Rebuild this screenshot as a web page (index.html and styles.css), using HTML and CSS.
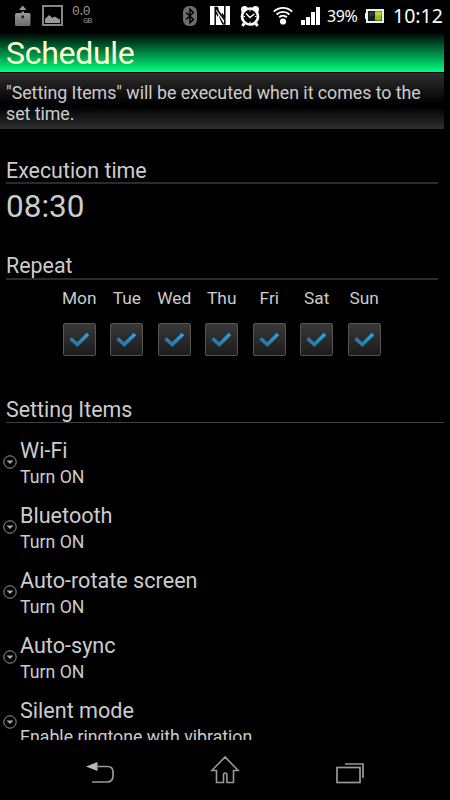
FILE: index.html
```
<!DOCTYPE html>
<html lang="en">
<head>
    <meta charset="UTF-8">
    <meta name="viewport" content="width=device-width, initial-scale=1.0">
    <title>Schedule</title>
    <link rel="stylesheet" href="styles.css">
</head>
<body>
    <svg class="defs" width="0" height="0">
        <defs>
            <linearGradient id="blue" x1="0" y1="1" x2="1" y2="0">
                <stop offset="0" stop-color="#2a6f98"/>
                <stop offset="1" stop-color="#2aa4e0"/>
            </linearGradient>
            <linearGradient id="gray" x1="0" y1="0" x2="0" y2="1">
                <stop offset="0" stop-color="#999"/>
                <stop offset="1" stop-color="#6c6c6c"/>
            </linearGradient>
        </defs>
        <symbol id="check" viewBox="0 0 31 31">
            <path d="M6.500 14.500l6.800 6 10.700-10.500" fill="none" stroke="url(#blue)" stroke-width="3.600"/>
        </symbol>
        <symbol id="arrow" viewBox="0 0 14 14">
            <circle cx="7" cy="7" r="6.2" fill="none" stroke="#999" stroke-width="1"/>
            <path d="M3.500 5.500h7L7 9z" fill="#aaa"/>
        </symbol>
    </svg>
    <div class="status">
        <svg class="icon-update" width="16" height="22" viewBox="0 0 16 22">
            <path d="M4 5l3.700-4.500L11.500 5z" fill="#999"/>
            <path d="M6.500 6.500H9V8H6.500z" fill="#999"/>
            <rect x="0" y="8" width="15.500" height="13" rx="1.500" fill="url(#gray)"/>
            <path d="M6.500 10.500h2.500v2l-1.200 1.500-1.300-1.500z" fill="#222"/>
        </svg>
        <svg class="icon-image" width="21" height="21" viewBox="0 0 21 21">
            <rect x="1" y="1" width="19" height="19" fill="none" stroke="#858585" stroke-width="2"/>
            <path d="M3 18v-4l4-4 3.500 3 2-1.500L18 14.500V18z" fill="#999"/>
        </svg>
        <div class="usage">
            <span class="usage-value">0.0</span>
            <span class="usage-unit">GB</span>
        </div>
        <svg class="icon-bluetooth" width="14" height="20" viewBox="0 0 14 20">
            <rect width="14" height="20" rx="6" fill="#6c6c6c"/>
            <path d="M3.200 6.500l7.200 7L7 16.700V3.300l3.400 3.200-7.200 7" fill="none" stroke="#000" stroke-width="1.500"/>
        </svg>
        <svg class="icon-nfc" width="20" height="19" viewBox="0 0 20 19">
            <rect width="20" height="19" fill="#fff"/>
            <path d="M5.200 19V1.500l2 0 7.600 10V0M5.200 5l8 13h1.600v-4" fill="none" stroke="#000" stroke-width="1.500"/>
            <path d="M8 7.500V19h4zM12 0v10L8.500 5V0z" fill="#fff"/>
            <path d="M5.200 1l9.600 13" stroke="#000" stroke-width="1.600"/>
        </svg>
        <svg class="icon-alarm" width="20" height="21" viewBox="0 0 20 21">
            <circle cx="4.500" cy="3.500" r="3.500" fill="#fff"/>
            <circle cx="15.500" cy="3.500" r="3.500" fill="#fff"/>
            <path d="M4 17.500l-1.500 2.500M16 17.500l1.500 2.500" stroke="#fff" stroke-width="3"/>
            <circle cx="10" cy="10.500" r="8" fill="#000" stroke="#fff" stroke-width="2.700"/>
            <path d="M6 7.500l4 4 4.500-3.700" fill="none" stroke="#fff" stroke-width="1.400"/>
            <path d="M10 4v1.500M10 15.500V17M3.500 10.500H5M15 10.500h1.500" stroke="#fff"/>
        </svg>
        <svg class="icon-wifi" width="20" height="19" viewBox="0 0 20 19">
            <circle cx="10" cy="15.500" r="3.100" fill="#fff"/>
            <path d="M.8 5.700A13 13 0 0 1 19.200 5.700M3.600 8.500a9.200 9.200 0 0 1 12.800 0M6.200 11.200a5.500 5.500 0 0 1 7.600 0" fill="none" stroke="#fff" stroke-width="1.900"/>
        </svg>
        <svg class="icon-signal" width="19" height="18" viewBox="0 0 19 18">
            <path d="M0 13h4v5H0zM5 10h4v8H5zM10 5h4v13h-4zM15 0h4v18h-4z" fill="#fff"/>
        </svg>
        <span class="percent">39%</span>
        <svg class="icon-battery" width="19" height="15" viewBox="0 0 19 15">
            <path d="M1 0h18v14H1v-4H0V4h1z" fill="#eee"/>
            <rect x="3" y="2" width="14" height="10" fill="#1b1b1b"/>
            <path d="M4 3h5v4H4z" fill="#333"/>
            <rect x="10" y="2.500" width="6.500" height="9" fill="#8bc60a"/>
            <rect x="10" y="2.500" width="6.500" height="4" fill="#aadb35"/>
        </svg>
        <span class="clock">10:12</span>
    </div>

    <div class="content">
        <h1 class="title">Schedule</h1>
        <p class="notice">"Setting Items" will be executed when it comes to the set time.</p>

        <h2 class="heading heading-time">Execution time</h2>
        <div class="time">08:30</div>

        <h2 class="heading heading-repeat">Repeat</h2>
        <div class="days">
            <div class="day"><span>Mon</span><svg class="checkbox"><use href="#check"/></svg></div>
            <div class="day"><span>Tue</span><svg class="checkbox"><use href="#check"/></svg></div>
            <div class="day"><span>Wed</span><svg class="checkbox"><use href="#check"/></svg></div>
            <div class="day"><span>Thu</span><svg class="checkbox"><use href="#check"/></svg></div>
            <div class="day"><span>Fri</span><svg class="checkbox"><use href="#check"/></svg></div>
            <div class="day"><span>Sat</span><svg class="checkbox"><use href="#check"/></svg></div>
            <div class="day"><span>Sun</span><svg class="checkbox"><use href="#check"/></svg></div>
        </div>

        <h2 class="heading heading-items">Setting Items</h2>
        <div class="items">
            <div class="item">
                <svg class="arrow"><use href="#arrow"/></svg>
                <div>
                    <div class="name">Wi-Fi</div>
                    <div class="value">Turn ON</div>
                </div>
            </div>
            <div class="item">
                <svg class="arrow"><use href="#arrow"/></svg>
                <div>
                    <div class="name">Bluetooth</div>
                    <div class="value">Turn ON</div>
                </div>
            </div>
            <div class="item">
                <svg class="arrow"><use href="#arrow"/></svg>
                <div>
                    <div class="name">Auto-rotate screen</div>
                    <div class="value">Turn ON</div>
                </div>
            </div>
            <div class="item">
                <svg class="arrow"><use href="#arrow"/></svg>
                <div>
                    <div class="name">Auto-sync</div>
                    <div class="value">Turn ON</div>
                </div>
            </div>
            <div class="item">
                <svg class="arrow"><use href="#arrow"/></svg>
                <div>
                    <div class="name">Silent mode</div>
                    <div class="value">Enable ringtone with vibration</div>
                </div>
            </div>
        </div>
    </div>

    <div class="navbar">
        <svg width="30" height="30" viewBox="0 0 30 30">
            <path d="M1 11.500L12.500 7v9z" fill="#bbb"/>
            <path d="M11 11.500h11.500q5.500 0 5.500 5.500v4q0 6-6 6H7" fill="none" stroke="#999" stroke-width="1.700"/>
        </svg>
        <svg width="30" height="30" viewBox="0 0 30 30">
            <path d="M15 2L1.800 15.500H6.500v12h7V20q0-2 1.700-2t1.700 2v7.500h6.600v-12h4.700z" fill="none" stroke="#999" stroke-width="1.600"/>
        </svg>
        <svg width="30" height="30" viewBox="0 0 30 30">
            <rect x="2" y="12.500" width="23" height="15" fill="none" stroke="#999" stroke-width="1.700"/>
            <path d="M10 9h18v14" fill="none" stroke="#999" stroke-width="1.700"/>
        </svg>
    </div>
</body>
</html>
```
FILE: styles.css
```
html, body {
    height: 100%;
}
body {
    margin: 0;
    display: flex;
    flex-direction: column;
    overflow: hidden;
    background-color: #000;
    color: #ccc;
    font-family: Roboto, "Liberation Sans", sans-serif;
}
svg {
    display: block;
    flex: none;
}
.defs {
    height: 0;
}

/* status bar */
.status {
    display: flex;
    align-items: flex-start;
    flex: none;
    box-sizing: border-box;
    height: 32px;
    padding-left: 15px;
    color: #fff;
    white-space: nowrap;
}
.icon-update {
    margin-top: 5px;
}
.icon-image {
    margin: 5px 0 0 11px;
}
.usage {
    display: flex;
    flex-direction: column;
    width: 20px;
    margin: 5px 0 0 9px;
    color: #999;
    font-family: "Liberation Mono", monospace;
}
.usage-value {
    font-size: 13px;
    line-height: 13px;
    letter-spacing: -2.4px;
}
.usage-unit {
    align-self: flex-end;
    font-size: 8px;
    line-height: 6px;
    letter-spacing: -0.4px;
}
.icon-bluetooth {
    margin: 6px 0 0 91px;
}
.icon-nfc {
    margin: 6px 0 0 13px;
}
.icon-alarm {
    margin: 6px 0 0 10px;
}
.icon-wifi {
    margin: 6px 0 0 13px;
}
.icon-signal {
    margin: 7px 0 0 8px;
}
.percent {
    width: 31px;
    margin: 6px 0 0 7px;
    font: 16px/20px "Noto Sans", sans-serif;
    letter-spacing: -0.4px;
}
.icon-battery {
    margin: 9px 0 0 7px;
}
.clock {
    margin: 4px 0 0 9px;
    font: 19.5px/24px "Noto Sans", sans-serif;
}

.content {
    flex: none;
    width: 444px;
    height: 708px;
    overflow: hidden;
}
.title {
    box-sizing: border-box;
    height: 40px;
    margin: 0;
    padding-left: 6px;
    background: linear-gradient(#000, #00ff80);
    color: #ffffd0;
    font-size: 32px;
    font-weight: 400;
    line-height: 43px;
    letter-spacing: -0.3px;
}
.notice {
    box-sizing: border-box;
    height: 56px;
    margin: 1px 0 0;
    padding: 9px 6px 0;
    background: linear-gradient(#2f2f2f, #000 55%, #000 60%, #303030);
    font-size: 17.8px;
    line-height: 21px;
    letter-spacing: -0.03px;
}

/* section headings */
.heading {
    box-sizing: border-box;
    height: 28px;
    margin: 0 6px;
    border-bottom: 2px solid #2b2b2b;
    font-size: 21.4px;
    font-weight: 400;
    line-height: 29px;
}
.heading-time {
    margin-top: 27px;
}
.heading-repeat {
    margin-top: 28px;
    line-height: 28px;
}
.heading-items {
    height: 27px;
    margin: 40px 0 0 6px;
    border-bottom-width: 1px;
    border-color: #404040;
    line-height: 27px;
}
.time {
    height: 40px;
    margin-left: 6px;
    font-size: 31.5px;
    line-height: 46px;
}

/* days of the week */
.days {
    display: grid;
    grid-template-columns: repeat(7, 47.5px);
    height: 76px;
    padding-left: 55.5px;
}
.day {
    display: flex;
    flex-direction: column;
    align-items: center;
    font-size: 17.3px;
    line-height: 37px;
}
.checkbox {
    box-sizing: border-box;
    width: 33px;
    height: 33px;
    margin-top: 6px;
    border: 1px solid #555;
    border-radius: 2px;
    background: linear-gradient(#383838, #1c1c1c);
}

.items {
    padding-top: 7px;
}
.item {
    display: flex;
    height: 65px;
    white-space: nowrap;
}
.arrow {
    width: 14px;
    height: 14px;
    margin: 25px 3px 0 3px;
}
.name {
    margin-top: 7px;
    font-size: 21.6px;
    line-height: 28px;
}
.value {
    font-size: 17.7px;
    line-height: 24px;
}

.navbar {
    display: flex;
    flex: none;
    justify-content: center;
    gap: 95px;
    height: 60px;
    padding-top: 15px;
    box-sizing: border-box;
}
```
